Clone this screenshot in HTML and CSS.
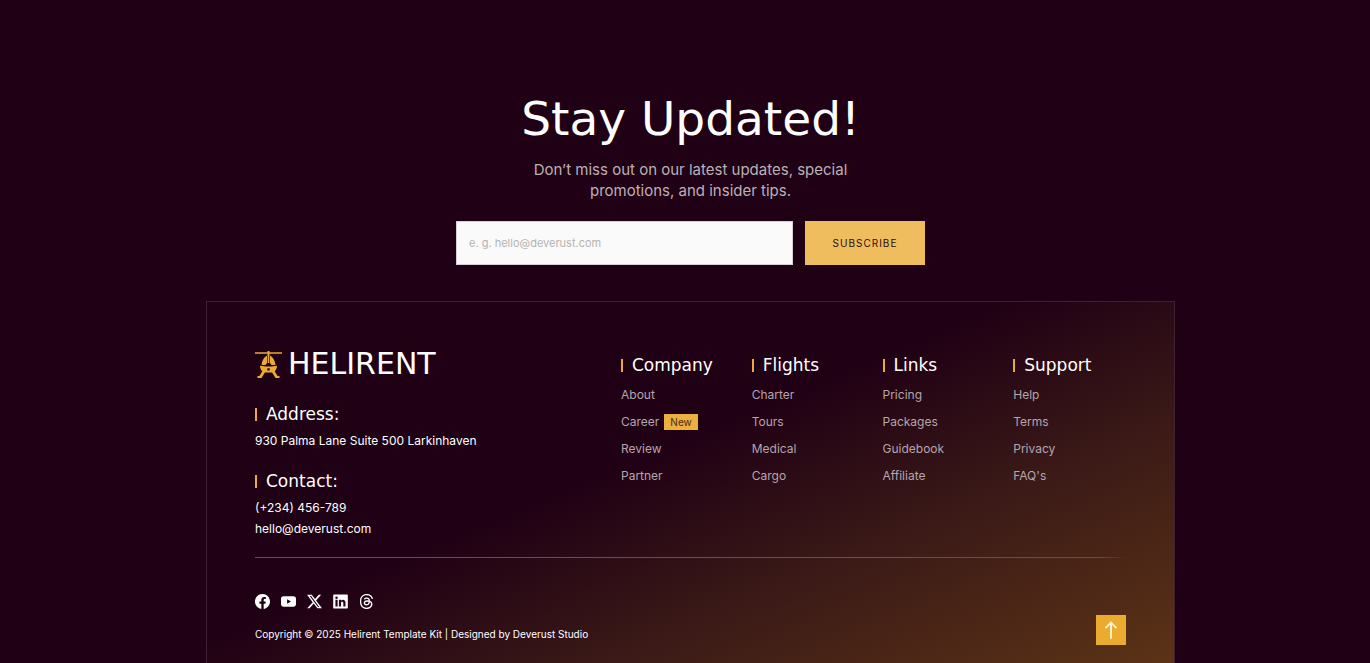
FILE: index.html
```html
<!DOCTYPE html>
<html lang="en">
<head>
<meta charset="utf-8">
<meta name="viewport" content="width=device-width, initial-scale=1">
<title>Helirent</title>
<link rel="stylesheet" href="styles.css">
</head>
<body>
<section class="newsletter">
  <h1 class="newsletter-title">Stay Updated!</h1>
  <p class="newsletter-text">Don’t miss out on our latest updates, special promotions, and insider tips.</p>
  <form class="newsletter-form">
    <input class="newsletter-input" type="email" aria-label="Email address" placeholder="e. g. hello@deverust.com">
    <button class="newsletter-button" type="submit">SUBSCRIBE</button>
  </form>
</section>
<footer class="panel">
  <div class="panel-main">
    <div class="info">
      <a class="brand" href="#">
        <svg class="brand-icon" viewBox="0 0 27 27" fill="currentColor" aria-hidden="true">
          <path d="M0 1.200h12.500V0h2v1.200H27v1.600H14.500V5h-2V2.800H0z"/>
          <path d="M12 4.500v7.500l-1.500 2H6.500C7 9.500 9 6 12 4.500zM15 4.500v7.500l1.500 2h4C20 9.500 18 6 15 4.500zM12.700 5h1.600v7h-1.600z"/>
          <path fill-rule="evenodd" d="M5 14.800l6 .8h5l6-.8c0 2.500-1 4.400-2.300 5.400l2.800 4.800H24.500V27h-4l-3.400-5.500H9.900L6.500 27H2.500v-2h2l2.800-4.800C6 19.200 5 17.300 5 14.800zM12.300 17.200v2.300h2.400v-2.300z"/>
        </svg>
        <span class="brand-name">HELIRENT</span>
      </a>
      <h2 class="heading">Address:</h2>
      <p class="info-text">930 Palma Lane Suite 500 Larkinhaven</p>
      <h2 class="heading heading-next">Contact:</h2>
      <p class="info-text">(+234) 456-789<br>hello@deverust.com</p>
    </div>
    <nav class="links" aria-label="Footer">
      <div>
        <h2 class="heading">Company</h2>
        <ul class="link-list">
          <li><a href="#">About</a></li>
          <li><a href="#">Career</a><span class="tag">New</span></li>
          <li><a href="#">Review</a></li>
          <li><a href="#">Partner</a></li>
        </ul>
      </div>
      <div>
        <h2 class="heading">Flights</h2>
        <ul class="link-list">
          <li><a href="#">Charter</a></li>
          <li><a href="#">Tours</a></li>
          <li><a href="#">Medical</a></li>
          <li><a href="#">Cargo</a></li>
        </ul>
      </div>
      <div>
        <h2 class="heading">Links</h2>
        <ul class="link-list">
          <li><a href="#">Pricing</a></li>
          <li><a href="#">Packages</a></li>
          <li><a href="#">Guidebook</a></li>
          <li><a href="#">Affiliate</a></li>
        </ul>
      </div>
      <div>
        <h2 class="heading">Support</h2>
        <ul class="link-list">
          <li><a href="#">Help</a></li>
          <li><a href="#">Terms</a></li>
          <li><a href="#">Privacy</a></li>
          <li><a href="#">FAQ's</a></li>
        </ul>
      </div>
    </nav>
  </div>
  <div class="divider"></div>
  <div class="panel-bottom">
    <div>
      <div class="social">
        <a href="#" aria-label="Facebook"><svg viewBox="0 0 16 16" fill="currentColor"><path d="M16 8.049c0-4.446-3.582-8.050-8-8.050C3.580 0 0 3.603 0 8.050c0 4.017 2.926 7.347 6.750 7.951v-5.625h-2.030V8.050H6.750V6.275c0-2.017 1.195-3.131 3.022-3.131.876 0 1.791.157 1.791.157v1.980h-1.009c-.993 0-1.303.621-1.303 1.258v1.510h2.218l-.354 2.326H9.250V16c3.824-.604 6.750-3.934 6.750-7.951"/></svg></a>
        <a href="#" aria-label="YouTube"><svg viewBox="0 0 16 16" fill="currentColor"><path fill-rule="evenodd" d="M3 2.500h10c2.300 0 3 1 3 3v5c0 2-.7 3-3 3H3c-2.300 0-3-1-3-3v-5c0-2 .7-3 3-3zM6.500 5.500v5l4.200-2.500z"/></svg></a>
        <a href="#" aria-label="X"><svg viewBox="0 0 16 16" fill="currentColor"><path d="M12.600.75h2.454l-5.360 6.142L16 15.250h-4.937l-3.867-5.070-4.425 5.070H.316l5.733-6.570L0 .75h5.063l3.495 4.633L12.601.75Zm-.860 13.028h1.360L4.323 2.145H2.865z"/></svg></a>
        <a href="#" aria-label="LinkedIn"><svg viewBox="0 0 16 16" fill="currentColor"><path fill-rule="evenodd" d="M1 .5h14a.8.8 0 0 1 .8.8v13.400a.8.8 0 0 1-.8.8H1a.8.8 0 0 1-.8-.8V1.300A.8.8 0 0 1 1 .5zM2.600 6.200v7h2.300v-7zM3.750 2.600a1.300 1.300 0 1 0 0 2.700 1.300 1.300 0 0 0 0-2.700zM6.300 6.200v7h2.300V9.700c0-1.900 2.400-2 2.400 0v3.500h2.300V9c0-3.400-3.500-3.700-4.800-1.800v-1z"/></svg></a>
        <a href="#" aria-label="Threads"><svg viewBox="0 0 16 16" fill="currentColor"><path d="M6.321 6.016c-.27-.18-1.166-.802-1.166-.802.756-1.081 1.753-1.502 3.132-1.502.975 0 1.803.327 2.394.948s.928 1.509 1.005 2.644q.492.207.905.484c1.109.745 1.719 1.860 1.719 3.137 0 2.716-2.226 5.075-6.256 5.075C4.594 16 1 13.987 1 7.994 1 2.034 4.482 0 8.044 0 9.690 0 13.550.243 15 5.036l-1.360.353C12.516 1.974 10.163 1.430 8.006 1.430c-3.565 0-5.582 2.171-5.582 6.790 0 4.143 2.254 6.343 5.630 6.343 2.777 0 4.847-1.443 4.847-3.556 0-1.438-1.208-2.127-1.270-2.127-.236 1.234-.868 3.310-3.644 3.310-1.618 0-3.013-1.118-3.013-2.582 0-2.090 1.984-2.847 3.550-2.847.586 0 1.294.040 1.663.114 0-.637-.540-1.728-1.900-1.728-1.250 0-1.566.405-1.967.868ZM8.716 8.190c-2.040 0-2.304.870-2.304 1.416 0 .878 1.043 1.168 1.600 1.168 1.020 0 2.067-.282 2.232-2.423a6.200 6.200 0 0 0-1.528-.161"/></svg></a>
      </div>
      <p class="copyright">Copyright © 2025 Helirent Template Kit | Designed by Deverust Studio</p>
    </div>
    <a class="to-top" href="#" aria-label="Back to top"><svg viewBox="0 0 16 20" fill="none" stroke="currentColor" stroke-width="2"><path d="M8 20V1.500M1.700 7.800L8 1.500l6.300 6.300"/></svg></a>
  </div>
</footer>
</body>
</html>
```

FILE: styles.css
```css
* {
  box-sizing: border-box;
}

body {
  display: flex;
  flex-direction: column;
  align-items: center;
  min-height: 100vh;
  margin: 0;
  padding: 93px 0 0 11px;
  background: #200014;
  color: #fff;
  font-family: Inter, "Liberation Sans", sans-serif;
  font-size: 12px;
}

h1, h2, p, ul {
  margin: 0;
  padding: 0;
}

a {
  color: inherit;
  text-decoration: none;
}

svg {
  display: block;
}

.newsletter {
  display: flex;
  flex-direction: column;
  align-items: center;
  width: 100%;
  max-width: 469px;
}

.newsletter-title {
  font-family: "DejaVu Sans", sans-serif;
  font-size: 47px;
  font-weight: 400;
  line-height: 52px;
  white-space: nowrap;
}

.newsletter-text {
  max-width: 340px;
  margin-top: 14px;
  color: #bdb0b9;
  font-size: 15px;
  line-height: 21px;
  text-align: center;
}

.newsletter-form {
  display: flex;
  gap: 12px;
  width: 100%;
  margin-top: 20px;
}

.newsletter-input {
  flex: 1;
  min-width: 0;
  height: 44px;
  padding: 0 12px;
  border: 1px solid #d8d0d6;
  border-radius: 0;
  background: #fafafa;
  font-family: inherit;
  font-size: 11px;
}

.newsletter-input::placeholder {
  color: #b5b2b4;
}

.newsletter-button {
  width: 120px;
  height: 44px;
  padding: 0;
  border: 0;
  background: #efbc5e;
  color: #2b1010;
  font-family: inherit;
  font-size: 10px;
  letter-spacing: 1px;
}

.panel {
  flex: 1;
  width: 100%;
  max-width: 969px;
  margin-top: 36px;
  padding: 48px 48px 18px;
  border: 1px solid #3c2231;
  border-bottom: 0;
  background: linear-gradient(157deg, #200014 44%, #3a1917 68%, #5c3316 100%);
}

.panel-main {
  display: grid;
  grid-template-columns: 1fr 505px;
}

.brand {
  display: flex;
  align-items: center;
  gap: 6px;
  height: 28px;
  margin-bottom: 26px;
}

.brand-icon {
  width: 27px;
  height: 27px;
  color: #ebab35;
}

.brand-name {
  font-family: "DejaVu Sans", sans-serif;
  font-size: 30px;
  line-height: 28px;
}

.heading {
  display: flex;
  align-items: center;
  gap: 9px;
  font-family: "DejaVu Sans", sans-serif;
  font-size: 17px;
  font-weight: 400;
  line-height: 20px;
}

.heading::before {
  content: "";
  width: 2px;
  height: 13px;
  background: #ebab35;
}

.heading-next {
  margin-top: 20px;
}

.info-text {
  margin-top: 6px;
  line-height: 21px;
}

.links {
  display: grid;
  grid-template-columns: repeat(4, 1fr);
  gap: 18px;
  padding-top: 5px;
}

.link-list {
  margin-top: 6px;
  color: #b5a5ae;
  list-style: none;
}

.link-list li {
  display: flex;
  align-items: center;
  gap: 5px;
  height: 27px;
}

.tag {
  padding: 0 6px;
  background: #ebb03f;
  color: #4a2b12;
  font-size: 10px;
  line-height: 16px;
}

.divider {
  height: 1px;
  margin-top: 18px;
  background: linear-gradient(90deg, #63504f 97%, transparent);
}

.panel-bottom {
  display: flex;
  align-items: flex-end;
  justify-content: space-between;
  padding-top: 36px;
}

.social {
  display: flex;
  gap: 11px;
}

.social svg {
  width: 15px;
  height: 15px;
}

.copyright {
  margin-top: 17px;
  padding-bottom: 3px;
  font-size: 10px;
  line-height: 16px;
}

.to-top {
  display: flex;
  align-items: center;
  justify-content: center;
  width: 30px;
  height: 30px;
  background: #ebab2f;
  color: #fff6d8;
}

.to-top svg {
  width: 14px;
  height: 20px;
}
```
